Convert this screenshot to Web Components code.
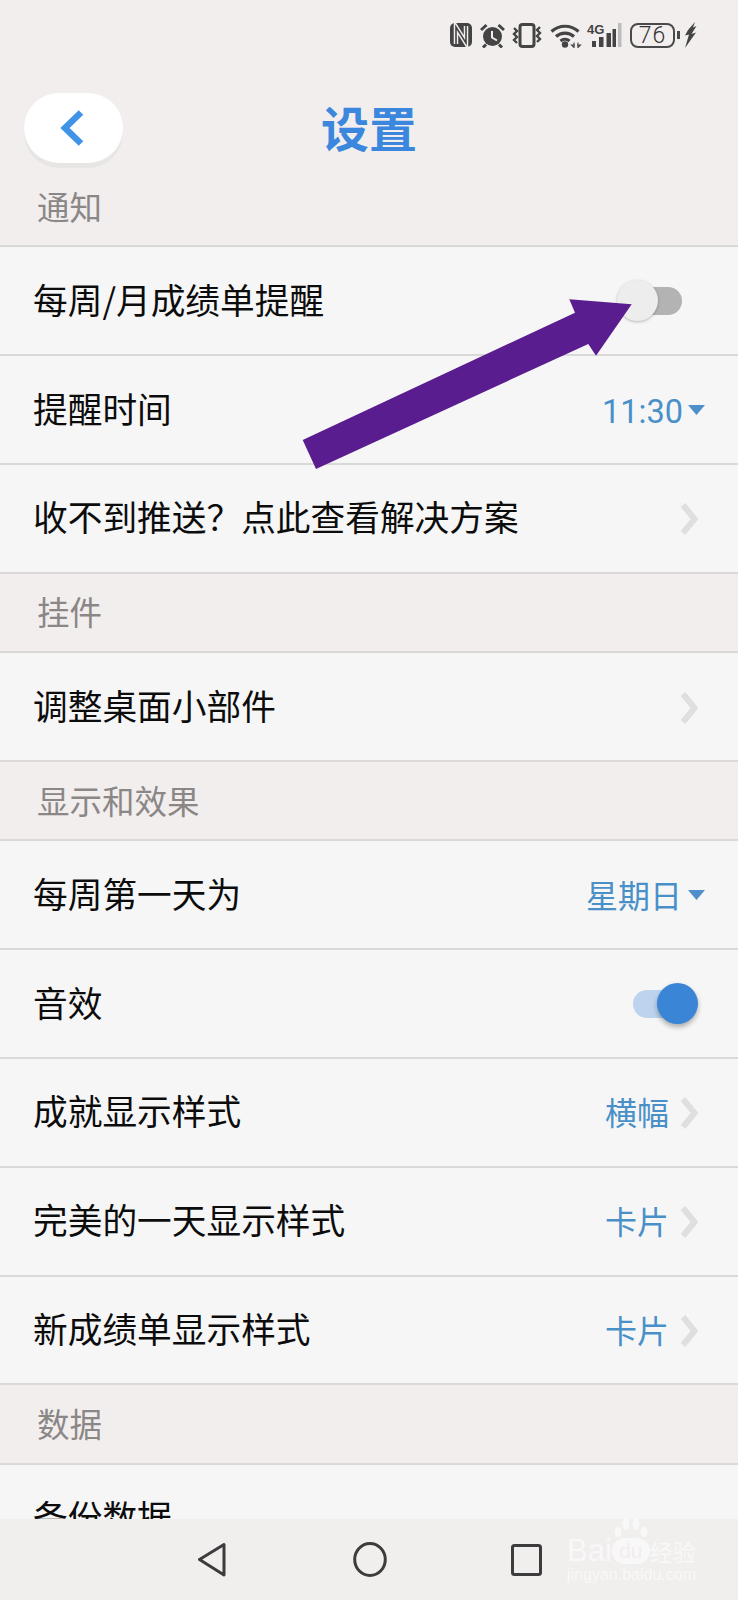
<!DOCTYPE html>
<html lang="zh">
<head>
<meta charset="utf-8">
<title>设置</title>
<style>
html, body { margin: 0; padding: 0; background: #f2eeee; }
body { font-family: "Noto Sans CJK SC", "Noto Sans", sans-serif; }
</style>
</head>
<body>
<app-screen>
  <status-bar slot="top"></status-bar>
  <settings-header slot="top">设置</settings-header>

  <section-head>通知</section-head>
  <setting-row>每周/月成绩单提醒<toggle-switch slot="end"></toggle-switch></setting-row>
  <setting-row>提醒时间<span slot="value" class="num">11:30</span><row-caret slot="end" tight></row-caret></setting-row>
  <setting-row>收不到推送&#xFF1F;点此查看解决方案<row-chevron slot="end"></row-chevron></setting-row>

  <section-head>挂件</section-head>
  <setting-row>调整桌面小部件<row-chevron slot="end"></row-chevron></setting-row>

  <section-head>显示和效果</section-head>
  <setting-row>每周第一天为<span slot="value">星期日</span><row-caret slot="end"></row-caret></setting-row>
  <setting-row>音效<toggle-switch slot="end" on></toggle-switch></setting-row>
  <setting-row>成就显示样式<span slot="value">横幅</span><row-chevron slot="end"></row-chevron></setting-row>
  <setting-row>完美的一天显示样式<span slot="value">卡片</span><row-chevron slot="end"></row-chevron></setting-row>
  <setting-row>新成绩单显示样式<span slot="value">卡片</span><row-chevron slot="end"></row-chevron></setting-row>

  <section-head>数据</section-head>
  <setting-row>备份数据</setting-row>

  <nav-bar slot="bottom"></nav-bar>
  <arrow-note slot="over"></arrow-note>
  <baidu-mark slot="over"></baidu-mark>
</app-screen>

<script>
function define(name, html) {
  let template = document.createElement("template");
  template.innerHTML = html;
  customElements.define(name, class extends HTMLElement {
    constructor() {
      super();
      this.attachShadow({ mode: "open" });
      this.shadowRoot.appendChild(template.content.cloneNode(true));
    }
  });
}

define("app-screen", `
<style>
:host { display: flex; flex-direction: column; position: relative; width: 738px; height: 1600px; overflow: hidden; background: #f2eeee; }
.list { flex: 1 1 auto; min-height: 0; overflow: hidden; }
</style>
<slot name="top"></slot>
<div class="list"><slot></slot></div>
<slot name="bottom"></slot>
<slot name="over"></slot>
`);

define("status-bar", `
<style>
:host { display: flex; align-items: center; justify-content: flex-end; height: 70px; padding: 0 41px 0 0; box-sizing: border-box; flex: 0 0 auto; }
svg { display: block; flex: 0 0 auto; }
.row { display: flex; align-items: center; height: 25px; }
.battery { width: 45px; height: 25px; box-sizing: border-box; border: 2px solid #4a4a4a; border-radius: 8px; margin-left: 8px; display: flex; align-items: center; justify-content: center; font: 300 23px/21px "Roboto", sans-serif; letter-spacing: 1px; color: #333; }
.nub { width: 3px; height: 8px; background: #4a4a4a; margin-left: 2px; }
</style>
<div class="row">
  <svg width="22" height="24" viewBox="0 0 22 24" style="margin-right:8px"><rect width="22" height="24" rx="5" fill="#444"/><path d="M6 21V4l10 16V3" fill="none" stroke="#f2eeee" stroke-width="4.500"/><path d="M6 24V4l10 16V0" fill="none" stroke="#444" stroke-width="1.600"/></svg>
  <svg width="25" height="25" viewBox="0 0 25 25" style="margin-right:7px"><circle cx="12.500" cy="13.500" r="9.500" fill="#444"/><path d="M12 8v6.500l5 3" fill="none" stroke="#f2eeee" stroke-width="2"/><path d="M1 7l5.500-5M24 7l-5.500-5M6 21.500L3 24.500M19 21.500l3 3" stroke="#444" stroke-width="3" fill="none"/></svg>
  <svg width="30" height="25" viewBox="0 0 30 25" style="margin-right:8px"><rect x="8" y="1.500" width="14" height="22" rx="2.500" fill="none" stroke="#444" stroke-width="3"/><path d="M2 5l3 3-3 3 3 3-3 3 3 3M28 4l-3 3 3 3-3 3 3 3-3 3" fill="none" stroke="#444" stroke-width="2.400"/></svg>
  <svg width="32" height="25" viewBox="0 0 32 25" style="margin-right:5px"><path d="M1.500 8.500a20 20 0 0 1 27 0M6 13.500a13.500 13.500 0 0 1 18 0M10.500 18a7 7 0 0 1 9 0" fill="none" stroke="#444" stroke-width="3.200"/><circle cx="15" cy="21.500" r="3.200" fill="#444"/><path d="M24 19.500v5l-2.500-2.500h3.500M28 19.500v5l2.500-2.500H27" fill="none" stroke="#444" stroke-width="1.100"/></svg>
  <svg width="35" height="25" viewBox="0 0 35 25"><text x="0" y="11" font-family="Liberation Sans, sans-serif" font-size="13" font-weight="700" fill="#444">4G</text><path fill="#444" d="M5 18h4v6H5zM12 14h4.500v10H12zM19.500 10H24v14h-4.500z"/><path fill="#444" d="M25.500 6H29v18h-3.500z"/><path fill="#bcbcbc" d="M31 0h3.500v24H31z"/></svg>
  <div class="battery">76</div>
  <div class="nub"></div>
  <svg width="13" height="26" viewBox="0 0 13 26" style="margin-left:4px"><path fill="#444" d="M11 0L4 8l-3 5.500 4-1L1 26l11-15.500-4.500 1.500L12.500 4 9 5.500z"/></svg>
</div>
`);

define("settings-header", `
<style>
:host { display: flex; align-items: flex-start; height: 98px; padding: 23px 0 0 24px; box-sizing: border-box; position: relative; flex: 0 0 auto; }
.back { width: 99px; height: 70px; border-radius: 35px; background: #fff; box-shadow: 0 5px 0 #e8e5e5; display: flex; align-items: center; justify-content: center; }
.back svg { margin-right: 4px; }
.title { text-align: center; font-size: 48px; line-height: 70px; font-weight: 700; color: #3a87dd; position: absolute; left: 0; right: 0; top: 21px; }
svg { display: block; }
</style>
<div class="back"><svg width="26" height="36" viewBox="0 0 26 36"><path d="M22 2.500L6 18l16 15.500" fill="none" stroke="#3f94e8" stroke-width="6.500"/></svg></div>
<div class="title"><slot></slot></div>
`);

define("section-head", `
<style>
:host { display: flex; align-items: center; height: 79.400px; padding: 0 0 3px 37px; box-sizing: border-box; background: #f2eeee; border-bottom: 2px solid #dbd9d8; font-size: 32.500px; color: #8a8786; }
</style>
<slot></slot>
`);

define("setting-row", `
<style>
:host { display: flex; align-items: center; height: 108.800px; padding: 0 33px; box-sizing: border-box; background: #f6f6f7; border-bottom: 2px solid #dbd9d8; font-size: 34.700px; color: #0c0c0c; }
.label { flex: 1 1 auto; white-space: nowrap; padding-bottom: 4px; }
.value { font-size: 32px; color: #4a90c8; padding-bottom: 2px; }
::slotted(.num) { font-family: "Roboto", sans-serif; font-size: 32.500px; font-weight: 400; }
</style>
<div class="label"><slot></slot></div>
<div class="value"><slot name="value"></slot></div>
<slot name="end"></slot>
`);

define("row-chevron", `
<style>
:host { display: block; margin: 2px 7px 0 11px; }
svg { display: block; }
</style>
<svg width="18" height="32" viewBox="0 0 18 32"><path d="M3 2l11.500 14L3 30" fill="none" stroke="#e0dfdf" stroke-width="6"/></svg>
`);

define("row-caret", `
<style>
:host { display: block; margin-left: 6px; }
:host([tight]) { margin-left: 5px; }
svg { display: block; }
</style>
<svg width="17" height="10" viewBox="0 0 17 10"><path d="M0 0h17L8.500 10z" fill="#4f8fcb"/></svg>
`);

define("toggle-switch", `
<style>
:host { display: block; position: relative; width: 82px; height: 42px; margin-right: 8px; }
.track { position: absolute; left: 15px; right: 15px; top: 7px; bottom: 7px; border-radius: 14px; background: #b3b3b3; }
.thumb { position: absolute; left: 2px; top: 0; width: 41px; height: 41px; border-radius: 50%; background: #ededed; box-shadow: 0 1px 3px rgba(0,0,0,.25); }
:host([on]) .track { left: 18px; right: 6px; background: #bcd4ed; }
:host([on]) .thumb { left: 42px; background: #3a85d6; box-shadow: 0 3px 5px rgba(0,0,0,.3); }
</style>
<div class="track"></div>
<div class="thumb"></div>
`);

define("nav-bar", `
<style>
:host { display: block; height: 81px; background: #f1eeee; flex: 0 0 auto; }
.icons { display: flex; align-items: center; height: 100%; padding-left: 197px; box-sizing: border-box; }
svg { display: block; }
</style>
<div class="icons">
  <svg width="30" height="35" viewBox="0 0 30 35" style="margin-right:126px"><path d="M27 2.500L2.500 17.500 27 33z" fill="none" stroke="#3c3c3c" stroke-width="3" stroke-linejoin="round"/></svg>
  <svg width="34" height="35" viewBox="0 0 34 35" style="margin-right:124px"><ellipse cx="17" cy="17.500" rx="15.300" ry="16" fill="none" stroke="#3c3c3c" stroke-width="3"/></svg>
  <svg width="31" height="32" viewBox="0 0 31 32"><rect x="1.500" y="1.500" width="28" height="29" rx="2" fill="none" stroke="#3c3c3c" stroke-width="3"/></svg>
</div>
`);

define("arrow-note", `
<style>
:host { display: block; position: absolute; left: 0; top: 0; width: 738px; height: 520px; pointer-events: none; }
svg { display: block; }
</style>
<svg width="738" height="520" viewBox="0 0 738 520"><polygon fill="#5a1d8f" points="302.700,440 575,312.700 569.300,299.300 631.700,304.300 596,355.700 588.300,344 316,469"/></svg>
`);

define("baidu-mark", `
<style>
:host { display: block; position: absolute; left: 567px; top: 1518px; width: 134px; height: 66px; color: #fff; font-family: "Liberation Sans", sans-serif; opacity: .6; }
.line { display: flex; align-items: center; position: absolute; left: 0; top: 19px; height: 27px; font-size: 31px; font-weight: 400; white-space: nowrap; }
.du { display: flex; align-items: center; justify-content: center; width: 38px; height: 26px; background: #fff; color: #f1eeee; border-radius: 13px; font-size: 21px; }
.jy { font-family: "Noto Sans CJK SC", sans-serif; font-size: 23px; }
.url { position: absolute; left: 0; top: 48px; font-size: 16px; line-height: 18px; white-space: nowrap; }
svg { position: absolute; left: 45px; top: 0; }
</style>
<svg width="38" height="20" viewBox="0 0 38 20"><g fill="#fff"><ellipse cx="6" cy="14" rx="3.500" ry="5"/><ellipse cx="14" cy="6" rx="3.500" ry="6"/><ellipse cx="24" cy="6" rx="3.500" ry="6"/><ellipse cx="32" cy="14" rx="3.500" ry="5"/></g></svg>
<div class="line">Bai<span class="du">du</span><span class="jy">经验</span></div>
<div class="url">jingyan.baidu.com</div>
`);
</script>
</body>
</html>
